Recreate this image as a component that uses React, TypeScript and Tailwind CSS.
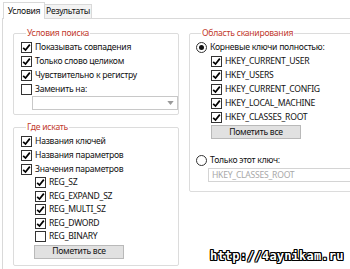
import { twMerge } from "tailwind-merge";

function Check({ checked, label, className }: { checked?: boolean; label: string; className?: string }) {
  return (
    <div className={twMerge("flex items-center h-[14px] gap-[3px]", className)}>
      <span className="w-[11px] h-[11px] border border-[#333] bg-white flex items-center justify-center shrink-0">
        {checked && (
          <svg viewBox="0 0 10 10" className="w-[9px] h-[9px]">
            <path d="M1.3 5.3 L3.9 7.8 L8.7 1.8" stroke="#000" strokeWidth="1.9" fill="none" />
          </svg>
        )}
      </span>
      <span className="whitespace-nowrap">{label}</span>
    </div>
  );
}

function Radio({ checked, label, className }: { checked?: boolean; label: string; className?: string }) {
  return (
    <div className={twMerge("flex items-center h-[14px] gap-[3px]", className)}>
      <span className="w-[11px] h-[11px] rounded-full border border-[#333] bg-white flex items-center justify-center shrink-0">
        {checked && <span className="w-[5px] h-[5px] rounded-full bg-[#111]" />}
      </span>
      <span className="whitespace-nowrap">{label}</span>
    </div>
  );
}

function Group({ title, className, children }: { title: string; className?: string; children: React.ReactNode }) {
  return (
    <fieldset className={twMerge("border border-[#dcdcdc] rounded-[2px]", className)}>
      <legend className="ml-[5px] px-[1px] leading-[14px] text-[#c23b2e]">{title}</legend>
      {children}
    </fieldset>
  );
}

function Button({ className }: { className?: string }) {
  return (
    <div
      className={twMerge(
        "h-[14px] w-[90px] border border-[#b9b9b9] bg-[#e1e1e1] flex items-center justify-center leading-none",
        className
      )}
    >
      Пометить все
    </div>
  );
}

export default function App() {
  return (
    <div
      className="relative w-[350px] h-[269px] overflow-hidden bg-white text-[8.6px] tracking-[-0.25px] text-[#111]"
      style={{ fontFamily: '"Noto Sans", "Open Sans", sans-serif' }}
    >
      {/* tabs */}
      <div className="flex items-end pl-[3px] pt-[2px] h-[18px]">
        <div className="relative z-10 -mb-px h-[17px] w-[42px] border border-b-0 border-[#d9d9d9] bg-white flex items-center justify-center">
          Условия
        </div>
        <div className="h-[14px] w-[47px] border border-l-0 border-b-0 border-[#d9d9d9] bg-[#f3f3f3] flex items-center justify-center">
          Результаты
        </div>
      </div>

      <div className="ml-[2px] h-full border-l border-t border-[#d9d9d9] pl-[10px] pt-[7px] flex gap-[10px]">
        {/* left column */}
        <div className="w-[177px] flex flex-col gap-[5px]">
          <Group title="Условия поиска" className="pl-[7px] pb-[4px]">
            <Check checked label="Показывать совпадения" />
            <Check checked label="Только слово целиком" />
            <Check checked label="Чувствительно к регистру" />
            <Check label="Заменить на:" />
            <div className="ml-[11px] w-[146px] h-[14px] border border-[#c8c8c8] bg-white flex items-center justify-end pr-[3px]">
              <svg viewBox="0 0 8 5" className="w-[7px] h-[4px]">
                <path d="M0 0 H8 L4 5 Z" fill="#9a9a9a" />
              </svg>
            </div>
          </Group>

          <Group title="Где искать" className="pl-[7px] pb-[6px]">
            <Check checked label="Названия ключей" />
            <Check checked label="Названия параметров" />
            <Check checked label="Значения параметров" />
            <div className="pl-[14px]">
              <Check checked label="REG_SZ" className="h-[13.5px]" />
              <Check checked label="REG_EXPAND_SZ" className="h-[13.5px]" />
              <Check checked label="REG_MULTI_SZ" className="h-[13.5px]" />
              <Check checked label="REG_DWORD" className="h-[13.5px]" />
              <Check label="REG_BINARY" className="h-[13.5px]" />
              <Button className="ml-[-1px] mt-[1px]" />
            </div>
          </Group>
        </div>

        {/* right column */}
        <div className="w-[180px] shrink-0">
          <Group title="Область сканирования" className="pl-[6px] pb-[9px]">
            <Radio checked label="Корневые ключи полностью:" />
            <div className="pl-[15px]">
              <Check checked label="HKEY_CURRENT_USER" />
              <Check checked label="HKEY_USERS" />
              <Check checked label="HKEY_CURRENT_CONFIG" />
              <Check checked label="HKEY_LOCAL_MACHINE" />
              <Check checked label="HKEY_CLASSES_ROOT" />
              <Button className="mt-[1px]" />
            </div>
            <Radio label="Только этот ключ:" className="mt-[14px]" />
            <div className="ml-[12px] mt-[1px] h-[14px] border border-[#d4d4d4] bg-white flex items-center pl-[3px] text-[#a8a8a8]">
              HKEY_CLASSES_ROOT
            </div>
          </Group>
        </div>
      </div>

      {/* watermark */}
      <div
        className="absolute left-[210px] top-[247px] text-[12px] font-bold text-white tracking-[0.2px] [text-shadow:1px_0_0_#000,-1px_0_0_#000,0_1px_0_#000,0_-1px_0_#000,1px_1px_0_#000,-1px_-1px_0_#000,1px_-1px_0_#000,-1px_1px_0_#000]"
        style={{ fontFamily: '"DejaVu Sans Mono", monospace' }}
      >
        http://4aynikam.ru
      </div>
    </div>
  );
}
